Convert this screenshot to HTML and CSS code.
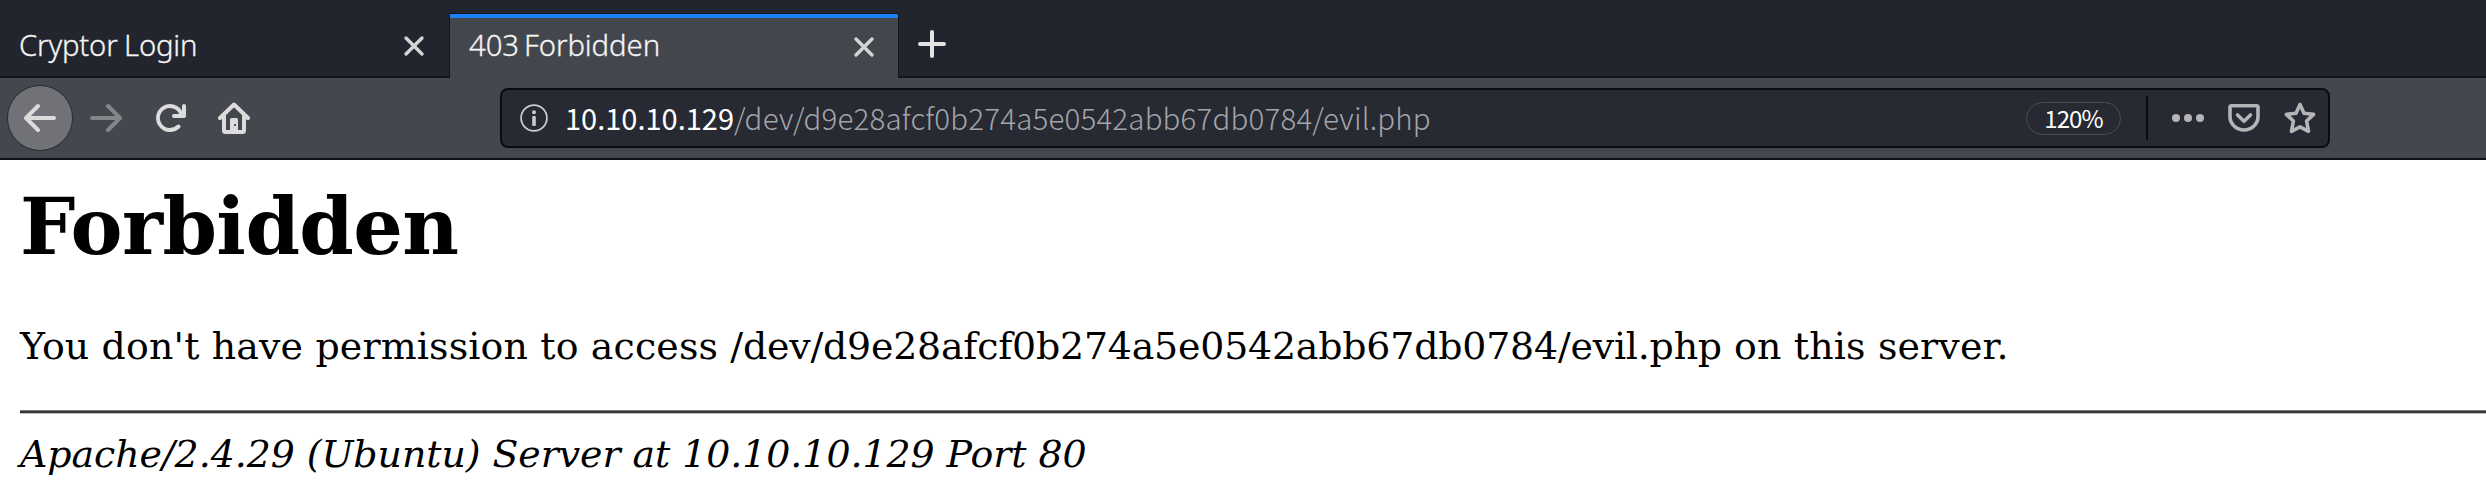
FILE: index.html
```
<!DOCTYPE html>
<html lang="en">
<head>
<meta charset="utf-8">
<title>403 Forbidden</title>
<link rel="stylesheet" href="styles.css">
</head>
<body>
<header class="browser">
  <div class="tabs">
    <div class="tab">
      <span class="tab-title">Cryptor Login</span>
      <svg class="close" viewBox="0 0 22 22"><path d="M3 3 19 19M19 3 3 19"/></svg>
    </div>
    <div class="tab active">
      <span class="tab-title">403 Forbidden</span>
      <svg class="close" viewBox="0 0 22 22"><path d="M3 3 19 19M19 3 3 19"/></svg>
    </div>
    <svg class="new-tab" viewBox="0 0 28 28"><path d="M14 2V26M2 14H26"/></svg>
  </div>
  <nav class="toolbar">
    <div class="back">
      <svg class="icon" viewBox="0 0 16 16"><path d="M15 7H3.414l4.293-4.293a1 1 0 0 0-1.414-1.414l-6 6a1 1 0 0 0 0 1.414l6 6a1 1 0 0 0 1.414-1.414L3.414 9H15a1 1 0 0 0 0-2z"/></svg>
    </div>
    <svg class="icon forward" viewBox="0 0 16 16"><path d="M1 7h11.586L8.293 2.707a1 1 0 0 1 1.414-1.414l6 6a1 1 0 0 1 0 1.414l-6 6a1 1 0 0 1-1.414-1.414L12.586 9H1a1 1 0 0 1 0-2z"/></svg>
    <svg class="icon reload" viewBox="0 0 16 16"><path d="M15 1a1 1 0 0 0-1 1v2.418A6.995 6.995 0 1 0 8 15a6.954 6.954 0 0 0 4.95-2.05 1 1 0 0 0-1.414-1.414A5.019 5.019 0 1 1 12.549 6H10a1 1 0 0 0 0 2h5a1 1 0 0 0 1-1V2a1 1 0 0 0-1-1z"/></svg>
    <svg class="icon home" viewBox="0 0 32 32">
      <path class="outline" d="M2 16 16 2.500 30 16M6 14V28.500Q6 30 7.500 30H24.500Q26 30 26 28.500V14"/>
      <path fill-rule="evenodd" d="M12 28V17.500Q12 16 13.500 16H18.500Q20 16 20 17.500V28ZM16.200 22V24H18V22Z"/>
    </svg>
    <div class="urlbar">
      <svg class="info" viewBox="0 0 28 28"><circle class="ring" cx="14" cy="14" r="12.900"/><circle cx="14" cy="8.200" r="2"/><rect x="12.200" y="12" width="3.600" height="10" rx="1"/></svg>
      <div class="url"><span class="host">10.10.10.129</span><span class="path">/dev/d9e28afcf0b274a5e0542abb67db0784/evil.php</span></div>
      <div class="zoom">120%</div>
      <div class="divider"></div>
      <svg class="icon dots" viewBox="0 0 32 32"><circle cx="4" cy="16" r="4"/><circle cx="16" cy="16" r="4"/><circle cx="28" cy="16" r="4"/></svg>
      <svg class="icon pocket" viewBox="0 0 32 32"><path class="outline" d="M3.500 3.800H28.500Q30 3.800 30 5.300V14.500A14 13.500 0 0 1 2 14.500V5.300Q2 3.800 3.500 3.800Z"/><path class="outline" d="M9.500 13 16 19.300 22.500 13"/></svg>
      <svg class="icon star" viewBox="0 0 32 32"><path class="outline" d="M16 2.500 20 11.300 29.600 12.400 22.600 19 24.500 29.300 16 24.800 7.500 29.300 9.400 19 2.400 12.400 12 11.300Z"/></svg>
    </div>
  </nav>
</header>
<main class="page">
  <h1>Forbidden</h1>
  <p>You don't have permission to access <span class="resource">/dev/d9e28afcf0b274a5e0542abb67db0784/evil.php</span> on this server.</p>
  <hr>
  <address>Apache/2.4.29 (Ubuntu) Server at 10.10.10.129 Port 80</address>
</main>
</body>
</html>
```
FILE: styles.css
```
* { box-sizing: border-box; }
body { margin: 0; height: 500px; overflow: hidden; background: #fff; }
svg { display: block; flex: none; }

.tabs {
  display: flex;
  height: 78px;
  padding-top: 13px;
  background: linear-gradient(#14151b, #14151b) bottom / 100% 2px no-repeat #23252e;
}
.tab {
  display: flex;
  align-items: center;
  justify-content: space-between;
  width: 449px;
  padding: 0 24px 0 19px;
  color: #f4f4f5;
  font: 300 29.3px/40px "Noto Sans", sans-serif;
  letter-spacing: -0.2px;
  word-spacing: -0.9px;
  white-space: nowrap;
}
.tab-title { margin-top: -2px; -webkit-text-stroke: 0.3px #f4f4f5; }
.tab.active {
  width: 450px;
  padding-right: 23px;
  border: solid #14151b;
  border-width: 1px 1px 0;
  background: linear-gradient(#1a80f8, #1a80f8) top / 100% 4px no-repeat #44464e;
  letter-spacing: -0.08px;
  word-spacing: -2.5px;
}
.close { width: 22px; height: 22px; margin-top: 1px; }
.close path { fill: none; stroke: #d4d4d4; stroke-width: 3.4; stroke-linecap: round; }
.new-tab { width: 28px; height: 28px; margin: 17px 0 0 19px; }
.new-tab path { fill: none; stroke: #e4e4e4; stroke-width: 4; stroke-linecap: round; }

.toolbar {
  display: flex;
  align-items: center;
  height: 82px;
  padding: 0 0 0 7px;
  border-bottom: 2px solid #101016;
  background: #44474e;
}
.icon { width: 32px; height: 32px; fill: #dcdcdc; }
.outline { fill: none; stroke: #dcdcdc; stroke-width: 4; stroke-linejoin: round; stroke-linecap: round; }
.back {
  display: grid;
  place-items: center;
  width: 66px;
  height: 66px;
  border: 1px solid #292a2e;
  border-radius: 50%;
  background: #717277;
}
.forward { margin-left: 17px; fill: #85868a; }
.reload { margin-left: 32px; }
.home { margin-left: 32px; }
.urlbar {
  display: flex;
  align-items: center;
  width: 1830px;
  height: 60px;
  margin-left: 250px;
  padding-left: 18px;
  border: 2px solid #0c0c10;
  border-radius: 8px;
  background: #272933;
}
.info { width: 28px; height: 28px; fill: #cbcbcf; }
.ring { fill: none; stroke: #cbcbcf; stroke-width: 1.8; }
.url {
  width: 1461px;
  margin: 0 0 3px 17px;
  font: 400 29px/40px "Noto Sans CJK SC", sans-serif;
  white-space: nowrap;
}
.host { color: #fff; }
.path { color: #a4a5a9; font-weight: 300; font-size: 29.5px; letter-spacing: 0.18px; }
.zoom {
  width: 95px;
  height: 33px;
  border: 1px solid #4b4e55;
  border-radius: 17px;
  color: #fff;
  font: 400 24px/29px "Noto Sans CJK SC", sans-serif;
  letter-spacing: -0.9px;
  text-align: center;
}
.divider { width: 2px; height: 44px; margin-left: 25px; background: #0c0c10; }
.urlbar .icon { fill: #b5b5b8; }
.urlbar .outline { stroke: #b5b5b8; stroke-width: 3.6; }
.dots { margin-left: 24px; }
.pocket, .star { margin-left: 24px; }

.page { padding: 21px 0 0 20px; color: #000; font: 37.9px/44px "DejaVu Serif", serif; white-space: nowrap; }
h1 { margin: 0; font-size: 78px; line-height: 92px; letter-spacing: -0.6px; }
p { margin: 51px 0 42px; letter-spacing: 0.16px; }
.resource { letter-spacing: -0.2px; }
hr {
  height: 4px;
  margin: 0 0 18px;
  border: solid #77797b;
  border-width: 1px 0;
  border-bottom-color: #bdbdbd;
  background: #33373a;
}
address { font-style: italic; letter-spacing: -0.06px; }
```
